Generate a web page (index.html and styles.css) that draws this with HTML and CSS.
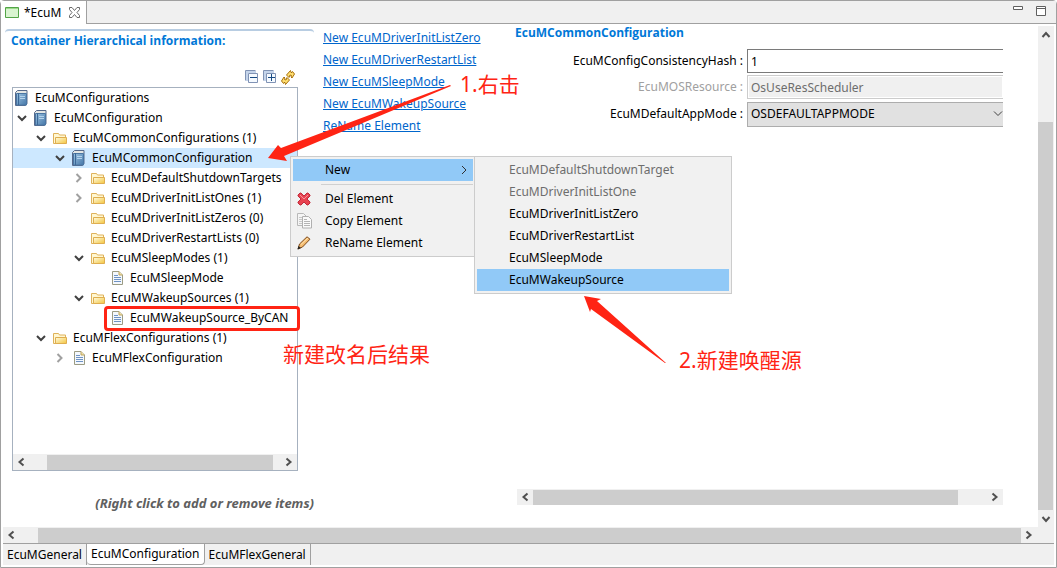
FILE: index.html
```html
<!DOCTYPE html>
<html lang="zh-CN">
  <head>
    <meta charset="utf-8">
    <title>EcuM</title>
    <link rel="stylesheet" href="styles.css">
  </head>
  <body>
    <!-- shared icons -->
    <svg class="defs" aria-hidden="true">
      <defs>
        <linearGradient id="blue" x1="0" x2="1" y1="0" y2="1">
          <stop offset="0" stop-color="#9cc3e2" />
          <stop offset="1" stop-color="#4577a8" />
        </linearGradient>
        <linearGradient id="gold" x1="0" x2="1" y1="0" y2="1">
          <stop offset="0" stop-color="#fffbe0" />
          <stop offset="1" stop-color="#f3c53e" />
        </linearGradient>
      </defs>
      <symbol id="book" viewBox="0 0 14 16">
        <path d="M.5 2.500 2.500.5h9.500v13l-1.500 2H.5z" fill="#e3e6e4" stroke="#56698a" />
        <path d="M1.500 3.500h10v11.500h-10z" fill="url(#blue)" stroke="#4a76a3" />
        <path d="M3.500 3v12" stroke="#3c6998" />
        <path d="M5 6.500h5M5 8.500h5" stroke="#b4d3ec" />
      </symbol>
      <symbol id="folder" viewBox="0 0 14 16">
        <path d="M.5 13.500V3.500h5l1 1.500h6v8.500z" fill="#fff7d2" stroke="#dfb25a" />
        <path d="M2.500 13.500v-6h11v6z" fill="url(#gold)" stroke="#dfae50" />
      </symbol>
      <symbol id="doc" viewBox="0 0 14 16">
        <path d="M2.500 1.500h6.500l3.500 3.500v9.500h-10z" fill="#f4f8fd" stroke="#9b9b83" />
        <path d="M9 1.500v3.500h3.500" fill="#f5e2a7" stroke="#bba35f" />
        <path d="M4 5.500h4M4 7.500h7M4 9.500h7M4 11.500h7" stroke="#6f93c4" />
      </symbol>
      <symbol id="down" viewBox="0 0 10 10">
        <path d="M1 3l4 4 4-4" fill="none" stroke="#404040" stroke-width="2" />
      </symbol>
      <symbol id="right" viewBox="0 0 10 10">
        <path d="M2.500 1l4 4-4 4" fill="none" stroke="#a0a0a0" stroke-width="2" />
      </symbol>
      <symbol id="scroll-prev" viewBox="0 0 10 10">
        <path d="M7.500 1.500 3.500 5l4 3.500" fill="none" stroke="#505050" stroke-width="2" />
      </symbol>
      <symbol id="scroll-next" viewBox="0 0 10 10">
        <path d="M2.500 1.500l4 3.500-4 3.500" fill="none" stroke="#505050" stroke-width="2" />
      </symbol>
    </svg>

    <div class="window">
      <div class="title-bar">
        <div class="editor-tab">
          <svg width="14" height="11" viewBox="0 0 14 11">
            <path d="M.5.5h13v10H.5z" fill="#d9f4d0" stroke="#53a447" />
            <path d="M1 1.500h12" stroke="#9bdc8b" />
          </svg>
          <span>*EcuM</span>
          <button class="close" aria-label="Close">
            <svg width="11" height="11" viewBox="0 0 11 11">
              <path d="M.5.5h2.500l2.500 3 2.500-3h2.500v2l-2.500 3 2.500 3v2h-2.500l-2.500-3-2.500 3H.5v-2l2.500-3-2.500-3z" fill="#fff" stroke="#6b6b6b" />
            </svg>
          </button>
        </div>
        <div class="window-buttons">
          <button aria-label="Minimize">
            <svg width="10" height="11" viewBox="0 0 10 11"><path d="M.5.5h9v3h-9z" fill="#fff" stroke="#606060" /></svg>
          </button>
          <button aria-label="Maximize">
            <svg width="10" height="11" viewBox="0 0 10 11"><path d="M.5.5h9v9h-9zM0 2.500h10" fill="#fff" stroke="#606060" /></svg>
          </button>
        </div>
      </div>

      <div class="editor">
        <div class="page">
          <div class="hierarchy">
            <h2>Container Hierarchical information:</h2>
            <div class="toolbar">
              <button aria-label="Collapse all">
                <svg width="14" height="14" viewBox="0 0 14 14">
                  <path d="M.5 10.500V.5h10" fill="none" stroke="#8093b5" />
                  <path d="M1 1h10v2H3v8H1z" fill="#c4d4ea" />
                  <path d="M3.500 3.500h9v9h-9z" fill="#f5faff" stroke="#8093b5" />
                  <path d="M5 7.500h7" stroke="#174a83" />
                </svg>
              </button>
              <button aria-label="Expand all">
                <svg width="14" height="14" viewBox="0 0 14 14">
                  <path d="M.5 10.500V.5h10" fill="none" stroke="#8093b5" />
                  <path d="M1 1h10v2H3v8H1z" fill="#c4d4ea" />
                  <path d="M3.500 3.500h9v9h-9z" fill="#f5faff" stroke="#8093b5" />
                  <path d="M5 7.500h7M8.500 4v7" stroke="#174a83" />
                </svg>
              </button>
              <button aria-label="Refresh">
                <svg width="14" height="15" viewBox="0 0 14 15">
                  <path d="M5.500 5 9.500.5l.5 2h1l.5-1 2 2.500-2.500 4-1-1 .5-1.500-1.500-.5-1 2.500z" fill="#ffdf70" stroke="#a8700c" />
                  <path d="M8.500 10l-4 4.500-.5-2H3l-.5 1-2-2.500L3 7l1 1-.5 1.500 1.500.5 1-2.500z" fill="#ffdf70" stroke="#a8700c" />
                </svg>
              </button>
            </div>
            <div class="tree">
              <ul role="tree">
                <li class="level-0"><svg class="icon"><use href="#book" /></svg>EcuMConfigurations</li>
                <li class="level-1"><svg class="arrow"><use href="#down" /></svg><svg class="icon"><use href="#book" /></svg>EcuMConfiguration</li>
                <li class="level-2"><svg class="arrow"><use href="#down" /></svg><svg class="icon"><use href="#folder" /></svg>EcuMCommonConfigurations (1)</li>
                <li class="level-3 selected"><svg class="arrow"><use href="#down" /></svg><svg class="icon"><use href="#book" /></svg>EcuMCommonConfiguration</li>
                <li class="level-4"><svg class="arrow"><use href="#right" /></svg><svg class="icon"><use href="#folder" /></svg>EcuMDefaultShutdownTargets</li>
                <li class="level-4"><svg class="arrow"><use href="#right" /></svg><svg class="icon"><use href="#folder" /></svg>EcuMDriverInitListOnes (1)</li>
                <li class="level-4"><svg class="arrow"></svg><svg class="icon"><use href="#folder" /></svg>EcuMDriverInitListZeros (0)</li>
                <li class="level-4"><svg class="arrow"></svg><svg class="icon"><use href="#folder" /></svg>EcuMDriverRestartLists (0)</li>
                <li class="level-4"><svg class="arrow"><use href="#down" /></svg><svg class="icon"><use href="#folder" /></svg>EcuMSleepModes (1)</li>
                <li class="level-5"><svg class="arrow"></svg><svg class="icon"><use href="#doc" /></svg>EcuMSleepMode</li>
                <li class="level-4"><svg class="arrow"><use href="#down" /></svg><svg class="icon"><use href="#folder" /></svg>EcuMWakeupSources (1)</li>
                <li class="level-5"><svg class="arrow"></svg><svg class="icon"><use href="#doc" /></svg>EcuMWakeupSource_ByCAN</li>
                <li class="level-2"><svg class="arrow"><use href="#down" /></svg><svg class="icon"><use href="#folder" /></svg>EcuMFlexConfigurations (1)</li>
                <li class="level-3"><svg class="arrow"><use href="#right" /></svg><svg class="icon"><use href="#doc" /></svg>EcuMFlexConfiguration</li>
              </ul>
              <div class="scrollbar tree-scroll">
                <svg><use href="#scroll-prev" /></svg>
                <div class="track"><div class="thumb"></div></div>
                <svg><use href="#scroll-next" /></svg>
              </div>
            </div>
            <p class="hint">(Right click to add or remove items)</p>
          </div>

          <div class="links">
            <a href="#">New EcuMDriverInitListZero</a>
            <a href="#">New EcuMDriverRestartList</a>
            <a href="#">New EcuMSleepMode</a>
            <a href="#">New EcuMWakeupSource</a>
            <a href="#">ReName Element</a>
          </div>

          <div class="details">
            <h2>EcuMCommonConfiguration</h2>
            <form>
              <label for="hash">EcuMConfigConsistencyHash :</label>
              <input id="hash" value="1">
              <label for="resource" class="off">EcuMOSResource :</label>
              <input id="resource" value="OsUseResScheduler" disabled>
              <label for="mode">EcuMDefaultAppMode :</label>
              <div class="select-wrapper">
                <select id="mode">
                  <option>OSDEFAULTAPPMODE</option>
                </select>
                <svg width="10" height="6" viewBox="0 0 10 6"><path d="M1 .5l4 4 4-4" fill="none" stroke="#404040" /></svg>
              </div>
            </form>
            <div class="scrollbar details-scroll">
              <svg><use href="#scroll-prev" /></svg>
              <div class="track"><div class="thumb"></div></div>
              <svg><use href="#scroll-next" /></svg>
            </div>
          </div>
        </div>

        <div class="scrollbar-vertical">
          <svg width="10" height="10" viewBox="0 0 10 10"><path d="M1.500 7 5 3l3.500 4" fill="none" stroke="#505050" stroke-width="2" /></svg>
          <div class="track"><div class="thumb"></div></div>
          <svg width="10" height="10" viewBox="0 0 10 10"><path d="M1.500 3 5 7l3.500-4" fill="none" stroke="#505050" stroke-width="2" /></svg>
        </div>
      </div>

      <div class="scrollbar page-scroll">
        <svg><use href="#scroll-prev" /></svg>
        <div class="track"><div class="thumb"></div></div>
        <svg><use href="#scroll-next" /></svg>
      </div>

      <div class="page-tabs">
        <button>EcuMGeneral</button>
        <button class="active">EcuMConfiguration</button>
        <button>EcuMFlexGeneral</button>
      </div>
    </div>

    <div class="menu context-menu">
      <button class="active">
        <span class="menu-icon"></span>New
        <svg class="more" width="6" height="10" viewBox="0 0 6 10"><path d="M1 1l4 4-4 4" fill="none" stroke="#303030" /></svg>
      </button>
      <hr>
      <button>
        <span class="menu-icon">
          <svg width="14" height="14" viewBox="0 0 14 14">
            <path d="M1 3l2-2h1l3 3 3-3h1l2 2v1l-3 3 3 3v1l-2 2h-1l-3-3-3 3H3l-2-2v-1l3-3-3-3z" fill="#e84350" stroke="#c12a3a" />
            <path d="M3 3l4 4 4-4" fill="none" stroke="#f6929a" />
          </svg>
        </span>Del Element
      </button>
      <button>
        <span class="menu-icon">
          <svg width="16" height="16" viewBox="0 0 16 16">
            <path d="M.5.500h6l3 3v9h-9z" fill="#f5f5f5" stroke="#b8b8b8" />
            <path d="M2 4.500h4M2 6.500h4M2 8.500h4M2 10.500h4" stroke="#c8c8c8" />
            <path d="M5.500 3.500h6l3 3v8.500h-9z" fill="#fafafa" stroke="#b0b0b0" />
            <path d="M7 6.500h3M7 8.500h6M7 10.500h6M7 12.500h6" stroke="#b4b4b4" />
          </svg>
        </span>Copy Element
      </button>
      <button>
        <span class="menu-icon">
          <svg width="14" height="14" viewBox="0 0 14 14">
            <path d="M1 13l1.500-5L10 .8l3 2.400L5.500 11z" fill="#f5bd71" stroke="#7d4a1c" />
            <path d="M4 8.500l7-6.500" stroke="#ffe2b2" />
            <path d="M.5 13.500l1-3.500 2.500 2z" fill="#222" />
          </svg>
        </span>ReName Element
      </button>
    </div>

    <div class="menu sub-menu">
      <button disabled><span class="menu-icon"></span>EcuMDefaultShutdownTarget</button>
      <button disabled><span class="menu-icon"></span>EcuMDriverInitListOne</button>
      <button><span class="menu-icon"></span>EcuMDriverInitListZero</button>
      <button><span class="menu-icon"></span>EcuMDriverRestartList</button>
      <button><span class="menu-icon"></span>EcuMSleepMode</button>
      <button class="active"><span class="menu-icon"></span>EcuMWakeupSource</button>
    </div>

    <!-- notes drawn over the editor -->
    <svg class="pointer pointer-tree" width="184" height="78" viewBox="0 0 184 78">
      <path d="M0 73 10 60l3 3L182 0l1 1L16 71l3 5z" fill="#ff2414" />
    </svg>
    <svg class="pointer pointer-menu" width="83" height="68" viewBox="0 0 83 68">
      <path d="M0 0l17 3-4 2 69 62h-1L7 13l-1 3z" fill="#ff2414" />
    </svg>
    <div class="result-box"></div>
    <p class="note note-click">1.右击</p>
    <p class="note note-create">2.新建唤醒源</p>
    <p class="note note-result">新建改名后结果</p>
  </body>
</html>
```

FILE: styles.css
```css
* {
  box-sizing: border-box;
}

body {
  margin: 0;
  font-family: "Noto Sans", "Noto Sans CJK SC", sans-serif;
  font-size: 12px;
  line-height: 20px;
  color: #000;
}

h2,
p,
ul {
  margin: 0;
  padding: 0;
}

button,
input,
select {
  margin: 0;
  padding: 0;
  border: 0;
  border-radius: 0;
  background: none;
  font: inherit;
  color: inherit;
}

svg {
  display: block;
  flex: none;
}

.defs {
  position: absolute;
  width: 0;
  height: 0;
}

.window {
  height: 100vh;
  display: flex;
  flex-direction: column;
  border: 1px solid #a0a0a0;
  border-radius: 4px 4px 0 0;
  padding-bottom: 2px;
  background: #fff;
}

.title-bar {
  height: 23px;
  display: flex;
  justify-content: space-between;
  background: linear-gradient(#a0a0a0, #a0a0a0) bottom / 100% 1px no-repeat #f0f0f0;
}

.editor-tab {
  width: 86px;
  display: flex;
  align-items: center;
  padding-left: 4px;
  gap: 5px;
  background: #fff;
  border-right: 1px solid #a0a0a0;
}

.editor-tab .close {
  margin-left: 3px;
}

.window-buttons {
  display: flex;
  align-items: flex-start;
  gap: 13px;
  padding: 5px 10px 0 0;
}

.editor {
  flex: 1;
  min-height: 0;
  display: flex;
  padding: 2px 2px 0 3px;
}

.page {
  flex: 1;
  min-width: 0;
  display: flex;
}

h2 {
  font-family: "Open Sans", "Noto Sans", sans-serif;
  font-size: 12px;
  font-weight: bold;
  color: #0078d7;
}

.hierarchy {
  width: 309px;
  margin: 3px 0 14px 1px;
  display: flex;
  flex-direction: column;
  border-top: 2px solid #b8cde2;
  border-radius: 4px 4px 0 0;
}

.hierarchy h2 {
  padding-left: 6px;
}

.toolbar {
  display: flex;
  justify-content: flex-end;
  gap: 4px;
  height: 36px;
  padding: 16px 19px 0 0;
}

.tree {
  flex: 1;
  display: flex;
  flex-direction: column;
  justify-content: space-between;
  width: 286px;
  margin-left: 7px;
  border: 1px solid #a6b1bf;
  overflow: hidden;
}

.tree ul {
  list-style: none;
}

.tree li {
  height: 20px;
  display: flex;
  align-items: center;
  white-space: nowrap;
}

.tree .selected {
  background: #cde8ff;
}

.tree .arrow {
  width: 10px;
  height: 10px;
  margin-right: 7px;
}

.tree .icon {
  width: 14px;
  height: 16px;
  margin-right: 6px;
}

.level-0 {
  padding-left: 2px;
}

.level-1 {
  padding-left: 4px;
}

.level-2 {
  padding-left: 23px;
}

.level-3 {
  padding-left: 42px;
}

.level-4 {
  padding-left: 61px;
}

.level-5 {
  padding-left: 80px;
}

.hint {
  padding-top: 22px;
  font-size: 13px;
  font-weight: bold;
  font-style: italic;
  text-align: right;
  color: #606060;
}

.links {
  width: 202px;
  padding: 1px 0 0 9px;
  display: flex;
  flex-direction: column;
  align-items: flex-start;
}

.links a {
  line-height: 22px;
  color: #0066cc;
}

.details {
  flex: 1;
  min-width: 0;
  display: flex;
  flex-direction: column;
  padding: 0 35px 22px 0;
}

.details h2 {
  line-height: 14px;
}

.details h2,
.details form {
  margin-left: -1px;
}

.details form {
  display: grid;
  grid-template-columns: 228px 1fr;
  grid-template-rows: 24px 24px 26px;
  row-gap: 2px;
  column-gap: 4px;
  align-items: center;
  padding-top: 9px;
}

.details label {
  text-align: right;
}

.details .off {
  color: #a0a0a0;
}

.details input {
  width: 100%;
  height: 24px;
  padding-left: 3px;
  border: 1px solid #7a7a7a;
  border-right: 0;
  background: #fff;
}

.details input:disabled {
  border-color: #ccc;
  box-shadow: inset 0 0 0 1px #fff;
  background: #f0f0f0;
  color: #6d6d6d;
}

.select-wrapper {
  display: flex;
  align-items: center;
  height: 25px;
  padding-left: 3px;
  border: 1px solid #adadad;
  border-right: 0;
  background: #e1e1e1;
}

.select-wrapper select {
  flex: 1;
  appearance: none;
}

.scrollbar {
  flex: none;
  height: 16px;
  display: flex;
  align-items: center;
  padding: 0 3px;
  background: #f0f0f0;
}

.scrollbar svg,
.scrollbar-vertical svg {
  width: 10px;
  height: 10px;
}

.track {
  flex: 1;
}

.thumb {
  background: #cdcdcd;
}

.scrollbar .thumb {
  height: 15px;
}

.tree-scroll .track {
  padding: 0 11px 0 21px;
}

.details-scroll {
  margin-top: auto;
  margin-left: 1px;
}

.details-scroll .track {
  padding: 0 32px 0 3px;
}

.page-scroll {
  margin: 0 2px;
  padding-right: 20px;
}

.page-scroll .track {
  padding: 0 3px 0 22px;
}

.scrollbar-vertical {
  width: 16px;
  display: flex;
  flex-direction: column;
  align-items: center;
  padding: 4px 0 3px;
  background: #f0f0f0;
}

.scrollbar-vertical .track {
  width: 100%;
  padding: 82px 1px 4px 0;
}

.scrollbar-vertical .thumb {
  height: 100%;
}

.page-tabs {
  height: 22px;
  margin: 0 2px;
  display: flex;
  border-top: 1px solid #a0a0a0;
  background: #f0f0f0;
}

.page-tabs button {
  height: 21px;
  padding: 0 4px;
  border-right: 1px solid #a0a0a0;
  line-height: 20px;
}

.page-tabs .active {
  background: #fff;
  border-bottom: 1px solid #a0a0a0;
  border-radius: 0 0 4px 4px;
}

.menu {
  position: absolute;
  display: flex;
  flex-direction: column;
  padding: 2px;
  border: 1px solid #ccc;
  background: #f1f1f1;
}

.menu button {
  display: flex;
  align-items: center;
  height: 22px;
  text-align: left;
}

.menu button:disabled {
  color: #6d6d6d;
}

.menu .active {
  background: #91c9f7;
}

.menu hr {
  width: calc(100% - 28px);
  height: 1px;
  margin: 3px 0 3px 28px;
  border: 0;
  background: #d0d0d0;
}

.menu-icon {
  width: 32px;
  display: flex;
  padding-left: 4px;
}

.menu .more {
  margin-left: auto;
  margin-right: 6px;
}

.context-menu {
  left: 290px;
  top: 156px;
  width: 186px;
}

.sub-menu {
  left: 474px;
  top: 156px;
  width: 258px;
}

.pointer {
  position: absolute;
}

.pointer-tree {
  left: 268px;
  top: 85px;
}

.pointer-menu {
  left: 584px;
  top: 296px;
}

.result-box {
  position: absolute;
  left: 104px;
  top: 306px;
  width: 196px;
  height: 25px;
  border: 3px solid #ff2414;
  border-radius: 4px;
}

.note {
  position: absolute;
  font-size: 21px;
  line-height: 28px;
  white-space: nowrap;
  color: #ff2414;
}

.note-click {
  left: 460px;
  top: 70px;
}

.note-create {
  left: 679px;
  top: 346px;
}

.note-result {
  left: 283px;
  top: 340px;
}
```
